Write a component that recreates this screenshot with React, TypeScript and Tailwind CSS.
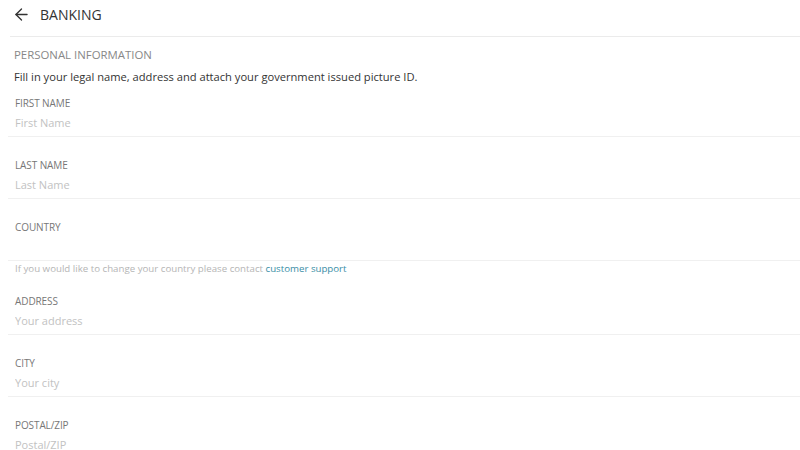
import { ArrowLeft } from "lucide-react";

interface FieldProps {
  label: string;
  placeholder?: string;
  first?: boolean;
}

function Field({ label, placeholder, first }: FieldProps) {
  return (
    <div className={`${first ? "pt-[11px]" : "pt-[21px]"} pl-[7px] pb-[3px] border-b border-[#f0f0f0]`}>
      <div className="text-[10px] leading-[14px] text-[#777] tracking-[-0.1px] uppercase">{label}</div>
      <input
        className="mt-[3px] block w-full h-[20px] text-[11px] leading-[20px] text-[#333] placeholder:text-[#c2c2c2] outline-none bg-transparent"
        placeholder={placeholder}
        readOnly
      />
    </div>
  );
}

export default function App() {
  return (
    <div className="w-[800px] h-[450px] overflow-hidden bg-white font-['Open_Sans',sans-serif]">
      {/* Top bar */}
      <div className="ml-[10px] h-[37px] flex items-center pl-[2px] pb-[7px] border-b border-[#ebebeb]">
        <ArrowLeft size={19} strokeWidth={1.7} className="text-[#333]" />
        <span className="ml-[9px] text-[14px] text-[#333]">BANKING</span>
      </div>

      <div className="pl-[14px] pt-[10px]">
        <div className="text-[11.4px] leading-[16px] text-[#888] uppercase">Personal Information</div>
        <p className="mt-[6px] text-[11.15px] leading-[16px] text-[#333]">
          Fill in your legal name, address and attach your government issued picture ID.
        </p>
      </div>

      <div className="ml-[8px]">
        <Field label="First Name" placeholder="First Name" first />
        <Field label="Last Name" placeholder="Last Name" />
        <Field label="Country" />
        <div className="pl-[7px] pt-[2px] h-[12px] text-[9.7px] leading-[11px] text-[#b5b5b5] whitespace-nowrap">
          If you would like to change your country please contact{" "}
          <a className="text-[#3a8ea6]">customer support</a>
        </div>
        <Field label="Address" placeholder="Your address" />
        <Field label="City" placeholder="Your city" />
        <Field label="Postal/Zip" placeholder="Postal/ZIP" />
      </div>
    </div>
  );
}
